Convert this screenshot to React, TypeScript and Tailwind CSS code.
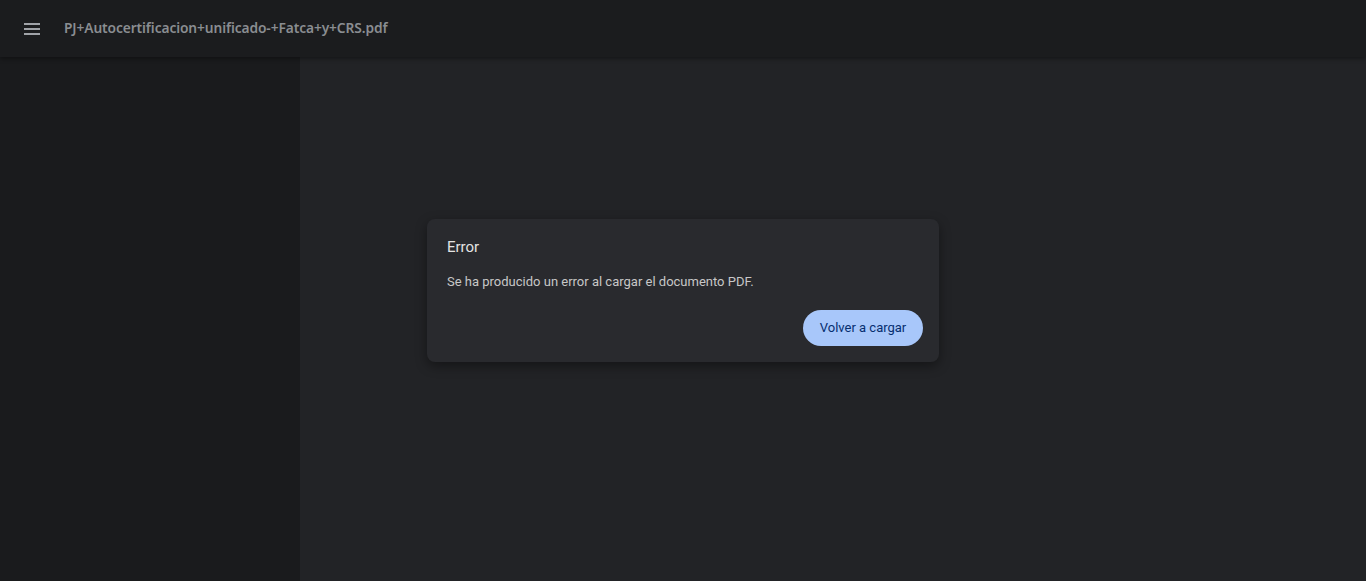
import React from 'react'

export default function App() {
  return (
    <div className="relative h-[581px] w-full flex flex-col bg-[#222326] overflow-hidden" style={{ fontFamily: '"Noto Sans", Roboto, sans-serif' }}>
      <header className="relative z-10 h-[57px] shrink-0 flex items-center bg-[#1b1c1e] shadow-[0_2px_4px_rgba(0,0,0,0.35)]">
        <button className="ml-[24px] w-[16px] h-[16px] flex flex-col justify-between py-[2px] text-[#a0a3a8]">
          <span className="block h-[2px] w-full bg-current" />
          <span className="block h-[2px] w-full bg-current" />
          <span className="block h-[2px] w-full bg-current" />
        </button>
        <h1 className="ml-[24px] text-[13.75px] font-semibold text-[#8a8d91] tracking-[-0.1px]">
          PJ+Autocertificacion+unificado-+Fatca+y+CRS.pdf
        </h1>
      </header>
      <div className="flex flex-1 min-h-0">
        <aside className="w-[300px] shrink-0 bg-[#1a1b1d]" />
        <main className="flex-1 bg-[#222326]" />
      </div>
      <div className="absolute inset-0 z-20 flex justify-center items-start pt-[219px] pointer-events-none">
        <div role="dialog" className="pointer-events-auto w-[512px] h-[143px] rounded-[8px] bg-[#292a2e] shadow-[0_4px_12px_rgba(0,0,0,0.4)] px-[20px] pt-[18px] flex flex-col" style={{ fontFamily: 'Roboto, "Noto Sans", sans-serif' }}>
          <h2 className="text-[15px] text-[#e3e3e3] leading-[20px]">Error</h2>
          <p className="mt-[16px] text-[13px] text-[#c7c7c7] leading-[18px]">
            Se ha producido un error al cargar el documento PDF.
          </p>
          <div className="mt-[19px] flex justify-end mr-[-4px]">
            <button className="h-[36px] w-[120px] rounded-full bg-[#a8c7fa] text-[#062e6f] text-[13px] font-normal">
              Volver a cargar
            </button>
          </div>
        </div>
      </div>
    </div>
  )
}
